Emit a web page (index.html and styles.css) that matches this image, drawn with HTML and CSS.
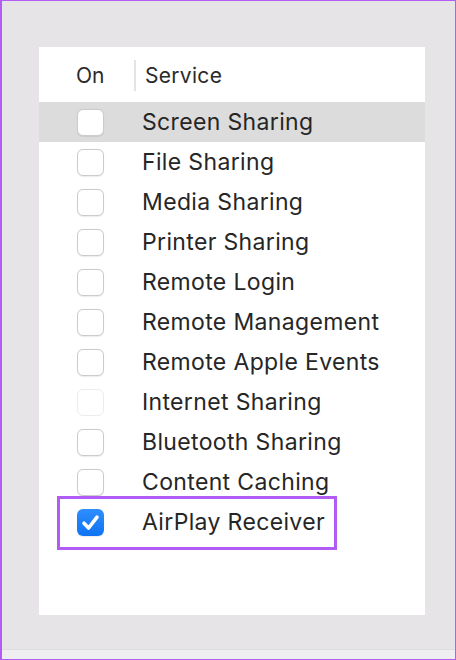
FILE: index.html
```html
<!DOCTYPE html>
<html lang="en">
<head>
    <meta charset="UTF-8">
    <meta name="viewport" content="width=device-width, initial-scale=1.0">
    <title>Sharing Services</title>
    <link rel="stylesheet" href="styles.css">
</head>
<body>
    <div class="frame">
        <div class="main">
            <div class="panel">
                <div class="header">
                    <span class="col-on">On</span>
                    <span class="divider"></span>
                    <span class="col-service">Service</span>
                </div>
                <div class="row selected">
                    <span class="check"></span>
                    <span class="label">Screen Sharing</span>
                </div>
                <div class="row">
                    <span class="check"></span>
                    <span class="label">File Sharing</span>
                </div>
                <div class="row">
                    <span class="check"></span>
                    <span class="label">Media Sharing</span>
                </div>
                <div class="row">
                    <span class="check"></span>
                    <span class="label">Printer Sharing</span>
                </div>
                <div class="row">
                    <span class="check"></span>
                    <span class="label">Remote Login</span>
                </div>
                <div class="row">
                    <span class="check"></span>
                    <span class="label">Remote Management</span>
                </div>
                <div class="row">
                    <span class="check"></span>
                    <span class="label">Remote Apple Events</span>
                </div>
                <div class="row">
                    <span class="check disabled"></span>
                    <span class="label">Internet Sharing</span>
                </div>
                <div class="row">
                    <span class="check"></span>
                    <span class="label">Bluetooth Sharing</span>
                </div>
                <div class="row">
                    <span class="check"></span>
                    <span class="label">Content Caching</span>
                </div>
                <div class="row highlighted">
                    <span class="check checked">
                        <svg width="27" height="27" viewBox="0 0 27 27">
                            <path d="M7 14.2 L11.6 19 L20 8.2" fill="none" stroke="#fff" stroke-width="3.6" stroke-linecap="round" stroke-linejoin="round"/>
                        </svg>
                    </span>
                    <span class="label">AirPlay Receiver</span>
                    <span class="callout"></span>
                </div>
            </div>
        </div>
        <div class="bottom"></div>
    </div>
</body>
</html>
```

FILE: styles.css
```css
body {
    margin: 0;
    font-family: Inter, "Noto Sans", sans-serif;
    background-color: #e6e4e7;
}
.frame {
    width: 456px;
    height: 660px;
    box-sizing: border-box;
    border: 1px solid #b45cf6;
    border-left-width: 2px;
    display: flex;
    flex-direction: column;
    background-color: #e6e4e7;
}
.main {
    flex: 1;
    padding: 46px 0 0 37px;
}
.panel {
    width: 386px;
    height: 568px;
    background-color: #fff;
}
.header {
    height: 55px;
    display: flex;
    align-items: center;
    color: #2a2a2a;
    font-size: 21px;
    padding-top: 1px;
    box-sizing: border-box;
}
.col-on {
    margin-left: 37px;
    width: 58px;
}
.divider {
    width: 2px;
    height: 31px;
    background-color: #e4e4e4;
}
.col-service {
    margin-left: 9px;
    letter-spacing: 0.3px;
}
.row {
    position: relative;
    height: 40px;
    display: flex;
    align-items: center;
}
.row.selected {
    background-color: #dcdcdc;
}
.check {
    box-sizing: border-box;
    width: 27px;
    height: 27px;
    margin-left: 38px;
    border: 1px solid #cbcbcb;
    border-radius: 6px;
    background-color: #fff;
    box-shadow: 0 0.5px 1px rgba(0, 0, 0, 0.08);
}
.check.disabled {
    border-color: #ececec;
    box-shadow: none;
}
.check.checked {
    border: none;
    background: linear-gradient(#2f8efd, #0f73f3);
}
.check svg {
    display: block;
}
.label {
    margin-left: 38px;
    font-size: 23px;
    color: #262626;
    letter-spacing: 0.35px;
}
.callout {
    position: absolute;
    left: 18px;
    top: -6px;
    width: 280px;
    height: 54px;
    box-sizing: border-box;
    border: 3px solid #b05cf5;
}
.bottom {
    height: 9px;
    border-top: 1px solid #dcdcdc;
    background-color: #efeff1;
}
```
